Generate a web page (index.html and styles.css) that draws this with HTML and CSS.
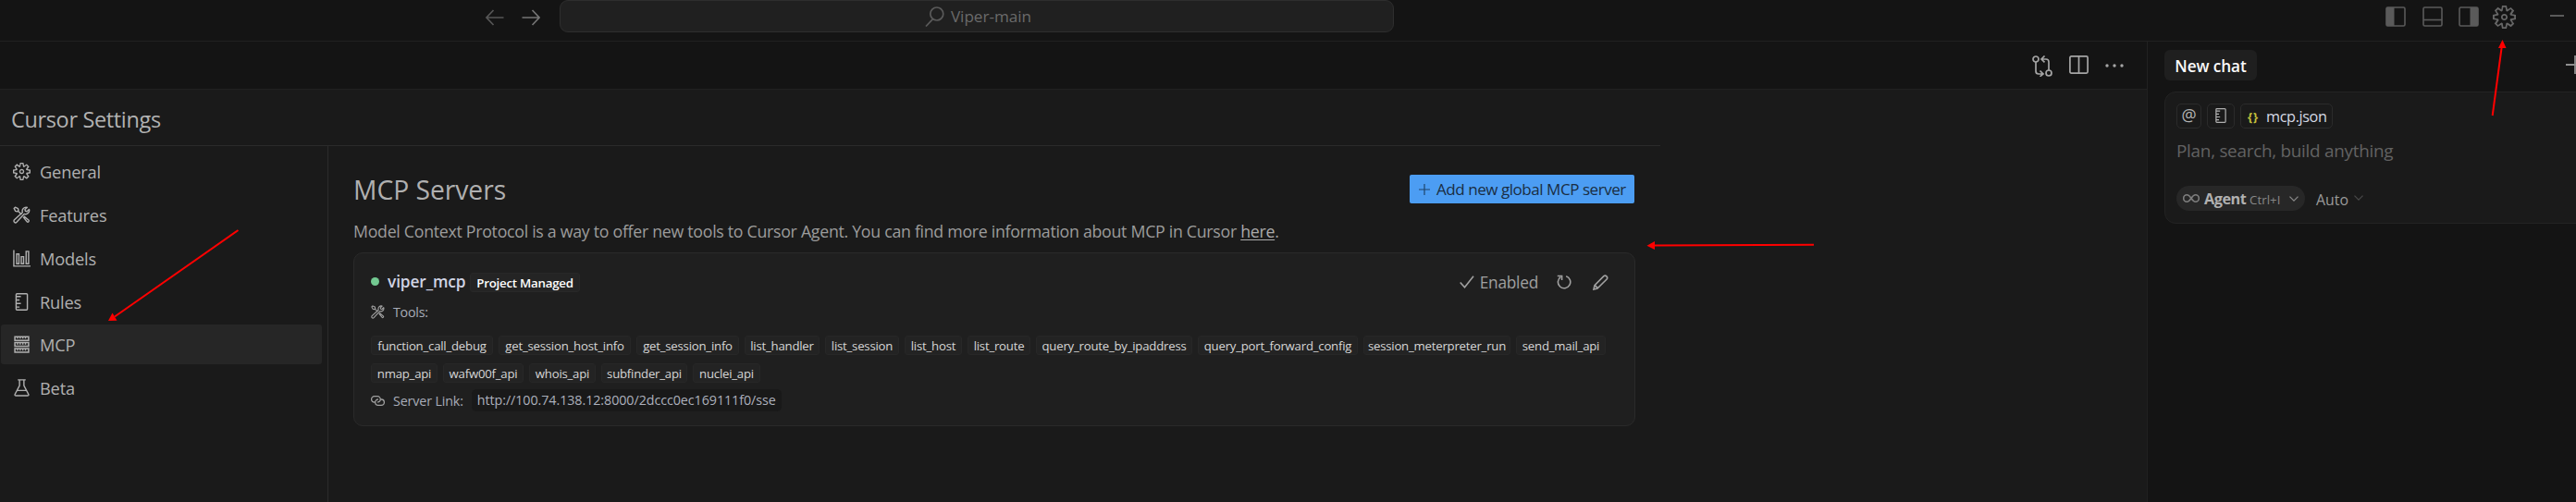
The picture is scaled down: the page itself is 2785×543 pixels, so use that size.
FILE: index.html
```html
<!DOCTYPE html>
<html lang="en">
<head>
<meta charset="utf-8">
<title>Cursor Settings</title>
<link rel="stylesheet" href="styles.css">
</head>
<body>
<svg class="defs" aria-hidden="true">
  <symbol id="gear" viewBox="1 1 14 14"><path fill="currentColor" fill-rule="evenodd" d="M9.1 4.4L8.6 2H7.4l-.5 2.4-.7.3-2-1.3-.9.8 1.3 2-.2.7-2.4.5v1.2l2.4.5.3.8-1.3 2 .8.8 2-1.3.8.3.4 2.3h1.2l.5-2.4.8-.3 2 1.3.8-.8-1.3-2 .3-.8 2.3-.4V7.4l-2.4-.5-.3-.8 1.3-2-.8-.8-2 1.3-.7-.2zM9.4 1l.5 2.4L12 2.1l2 2-1.4 2.1 2.4.4v2.8l-2.4.5L14 12l-2 2-2.1-1.4-.5 2.4H6.6l-.5-2.4L4 13.9l-2-2 1.4-2.1L1 9.4V6.6l2.4-.5L2.1 4l2-2 2.1 1.4.4-2.4h2.8zm.6 7c0 1.1-.9 2-2 2s-2-.9-2-2 .9-2 2-2 2 .9 2 2zM8 9c.6 0 1-.4 1-1s-.4-1-1-1-1 .4-1 1 .4 1 1 1z"/></symbol>
  <symbol id="tools" viewBox="0 0 20 20"><g fill="none" stroke="currentColor" stroke-width="1.5" stroke-linejoin="round"><path d="M1.2 2.6 2.6 1.2l3.2 1.6.5 2L4.9 6.2l-2-.5zM5.8 5.6l4 4M11.6 12.2l4.4 5.4a1.2 1.2 0 0 0 1.8-1.8l-5.4-4.4"/><path d="M16.2 1.4a4.3 4.3 0 0 0-5.3 5.6L1.6 15.6a1.7 1.7 0 0 0 2.6 2.6l8.6-9.3a4.3 4.3 0 0 0 5.6-5.3L15.9 6l-1.8-.4-.4-1.8z"/></g></symbol>
  <symbol id="rule" viewBox="0 0 20 20"><path fill="none" stroke="currentColor" stroke-width="1.5" d="M4.600.8h10.800a1 1 0 0 1 1 1v16.400a1 1 0 0 1-1 1H4.600a1 1 0 0 1-1-1V1.800a1 1 0 0 1 1-1zM4 4h5M4 7.900h3.500M4 11.900h5M4 15.900h3.500"/></symbol>
  <symbol id="chev" viewBox="0 0 10 6"><path fill="none" stroke="currentColor" stroke-width="1.300" d="M.5.600 5 5.100 9.500.600"/></symbol>
</svg>

<div class="window">
  <header class="titlebar">
    <div class="history">
      <svg class="arrow dim" viewBox="0 0 20 18"><path d="M19.500 9H1.500M8.500 1 1 9l7.500 8"/></svg>
      <svg class="arrow" viewBox="0 0 20 18"><path d="M.5 9h18M11.500 1 19 9l-7.500 8"/></svg>
    </div>
    <div class="command">
      <svg class="magnifier" viewBox="0 0 21 22"><circle cx="12.800" cy="8" r="7"/><path d="M8.500 13.600 1 21.500"/></svg>
      <span>Viper-main</span>
    </div>
    <div class="window-tools">
      <svg class="panel" viewBox="0 0 22 22"><rect x="1" y="1" width="20" height="20" rx="1.500"/><path class="solid" d="M1 1h8.500v20H1z"/></svg>
      <svg class="panel" viewBox="0 0 22 22"><rect x="1" y="1" width="20" height="20" rx="1.500"/><path d="M1 14.500h20"/></svg>
      <svg class="panel" viewBox="0 0 22 22"><rect x="1" y="1" width="20" height="20" rx="1.500"/><path class="solid" d="M12.500 1H21v20h-8.500z"/></svg>
      <svg class="gear"><use href="#gear"/></svg>
      <span class="minimize"></span>
    </div>
  </header>

  <div class="workbench">
    <main class="editor">
      <div class="tabs">
        <svg class="compare" viewBox="0 0 22 23"><circle cx="4" cy="4" r="3"/><circle cx="18" cy="19" r="3"/><path d="M4 7v10q0 3 3 3h4.500M8.500 16.500l3.500 3.500-3.500 2.800M18 16V7q0-3-3-3h-4.500M13.500.5 10 4l3.500 3.300"/></svg>
        <svg class="split" viewBox="0 0 21 20"><rect x=".9" y=".9" width="19.200" height="18.200" rx="1.500"/><path d="M10.500 1v18"/></svg>
        <svg class="dots" viewBox="0 0 20 4"><circle cx="2" cy="2" r="1.700"/><circle cx="10" cy="2" r="1.700"/><circle cx="18" cy="2" r="1.700"/></svg>
      </div>
      <div class="settings">
        <h1>Cursor Settings</h1>
        <div class="columns">
          <nav>
            <a><svg><use href="#gear"/></svg>General</a>
            <a><svg><use href="#tools"/></svg>Features</a>
            <a><svg viewBox="0 0 20 20"><path fill="none" stroke="currentColor" stroke-width="1.500" d="M1 .5v18.300h19M4.200 5h2.600v11H4.200zM9.500 8h2.600v8H9.500zM15 2h2.800v14H15z"/></svg>Models</a>
            <a><svg><use href="#rule"/></svg>Rules</a>
            <a class="selected"><svg viewBox="0 0 20 20"><path fill="none" stroke="currentColor" stroke-width="1.600" d="M2.200 1.300h15.600v4.200H2.200zM2.200 8h15.600v4.200H2.200zM2.200 14.700h15.600v4.200H2.200z"/><path stroke="currentColor" stroke-width="2" stroke-dasharray="1.500 1.500" d="M4.500 2.500h11M4.500 9.300h11M4.500 16h11"/></svg>MCP</a>
            <a><svg viewBox="0 0 20 20"><path fill="none" stroke="currentColor" stroke-width="1.500" d="M5.500.9h9M7.500 1v6.500L2.300 17.300q-.6 1.700 1.200 1.700h13q1.800 0 1.200-1.700L12.500 7.500V1M5 13h10"/></svg>Beta</a>
          </nav>
          <section class="content">
            <div class="heading">
              <h2>MCP Servers</h2>
              <button><svg viewBox="0 0 12 12"><path d="M6 0v12M0 6h12"/></svg>Add new global MCP server</button>
            </div>
            <p>Model Context Protocol is a way to offer new tools to Cursor Agent. You can find more information about MCP in Cursor <u>here</u>.</p>
            <div class="card">
              <div class="server">
                <i class="dot"></i><strong>viper_mcp</strong><span class="badge">Project Managed</span>
                <div class="actions">
                  <svg class="check" viewBox="0 0 16 14"><path d="M.7 7.500 5.500 12.800 15 .8"/></svg>
                  <span>Enabled</span>
                  <svg class="refresh" viewBox="0 0 16 16"><path d="M10.200 1.700A6.700 6.700 0 1 1 4.200 2.600M.8 1.500h4.800v4.600"/></svg>
                  <svg class="pencil" viewBox="0 0 17 17"><path d="M1 16l1-4.300L11.900 1.700q1.500-1.300 3 .1t.2 3.200L5 15zM2.500 11.800l2.600 2.600"/></svg>
                </div>
              </div>
              <div class="label"><svg><use href="#tools"/></svg>Tools:</div>
              <div class="chips">
                <span style="width:132px">function_call_debug</span><span style="width:143px">get_session_host_info</span><span style="width:111px">get_session_info</span><span style="width:81px">list_handler</span><span style="width:80px">list_session</span><span style="width:62px">list_host</span><span style="width:68px">list_route</span><span style="width:169px">query_route_by_ipaddress</span><span style="width:173px">query_port_forward_config</span><span style="width:159px">session_meterpreter_run</span><span style="width:97px">send_mail_api</span><span style="width:72px">nmap_api</span><span style="width:87px">wafw00f_api</span><span style="width:72px">whois_api</span><span style="width:93px">subfinder_api</span><span style="width:73px">nuclei_api</span>
              </div>
              <div class="label link"><svg viewBox="0 0 20 20"><g fill="none" stroke="currentColor" stroke-width="1.700"><path d="M6 12H5a4.200 4.200 0 0 1 0-8.400h4.500a4.200 4.200 0 0 1 0 8.400"/><path d="M14 8h1a4.200 4.200 0 0 1 0 8.400h-4.500a4.200 4.200 0 0 1 0-8.400"/></g></svg>Server Link:<code>http://100.74.138.12:8000/2dccc0ec169111f0/sse</code></div>
            </div>
          </section>
        </div>
      </div>
    </main>

    <aside class="chat">
      <div class="chat-head"><span class="chat-tab">New chat</span><svg viewBox="0 0 20 20"><path d="M10 0v20M0 10h20"/></svg></div>
      <div class="composer">
        <div class="context">
          <span class="at">@</span>
          <span class="rules"><svg><use href="#rule"/></svg></span>
          <span class="file"><b>{}</b>mcp.json</span>
        </div>
        <div class="placeholder">Plan, search, build anything</div>
        <div class="mode">
          <span class="agent"><svg class="loop" viewBox="0 0 18 9"><path d="M9 4.500C7.300 2 6 .8 4.400.8a3.700 3.700 0 0 0 0 7.400C6 8.200 7.300 7 9 4.500S12 .8 13.600.8a3.700 3.700 0 0 1 0 7.400C12 8.200 10.700 7 9 4.500z"/></svg><strong>Agent</strong><small>Ctrl+I</small><svg class="chev"><use href="#chev"/></svg></span>
          <span class="auto">Auto<svg class="chev"><use href="#chev"/></svg></span>
        </div>
      </div>
    </aside>
  </div>

  <!-- Pointer annotations over the window -->
  <svg class="pointers" viewBox="0 0 2785 543">
    <path class="shaft" d="M257.500 249 124 342.500M1961 264.700 1788 265.600M2694.700 125 2704.800 50"/>
    <path class="head" d="M117 347l4.500-8.500 5 8.200zM1780.500 265.700l8.500-4.700v9zM2705.500 43l4 9h-8.500z"/>
  </svg>
</div>
</body>
</html>
```

FILE: styles.css
```css
* { box-sizing: border-box; }
body { margin: 0; background: #141414; color: #b0b0b0; font-family: "Open Sans", "Noto Sans", sans-serif; }
svg { display: block; flex: none; }
.defs { position: absolute; width: 0; height: 0; }
.window { position: relative; display: flex; flex-direction: column; width: 2785px; height: 543px; overflow: hidden; }

/* title bar */
.titlebar { display: flex; height: 45px; border-bottom: 1px solid #212121; color: #6a6a6a; }
.history { display: flex; gap: 19px; width: 605px; padding: 10px 0 0 525px; }
.arrow { width: 20px; height: 18px; fill: none; stroke: #747474; stroke-width: 1.7; }
.arrow.dim { stroke: #565656; }
.command { display: flex; align-items: center; justify-content: center; gap: 7px; width: 902px; height: 35px; padding-left: 3px; background: #202020; border: 1px solid #2e2e2e; border-radius: 9px; font-size: 17.2px; letter-spacing: -.05px; line-height: 34px; }
.magnifier { width: 21px; height: 22px; fill: none; stroke: #5a5a5a; stroke-width: 1.7; }
.window-tools { display: flex; align-items: flex-start; gap: 17.500px; margin-left: 1072px; padding-top: 7px; }
.panel { width: 22px; height: 22px; fill: none; stroke: #5a5a5a; stroke-width: 1.6; }
.panel .solid { fill: #5a5a5a; stroke: none; }
.window-tools .gear { width: 25px; height: 25px; margin: -1px 0 0 -3px; color: #666; }
.minimize { width: 15px; height: 2px; margin: 9px 0 0 20px; background: #5a5a5a; }

.workbench { display: flex; flex: 1; min-height: 0; }
.editor { display: flex; flex-direction: column; width: 2321px; background: #1a1a1a; }
.tabs { display: flex; align-items: flex-start; height: 52px; padding: 15px 0 0 2197px; background: #141414; border-bottom: 1px solid #212121; }
.tabs svg { fill: none; stroke: #a5a5a5; stroke-width: 1.7; }
.compare { width: 22px; height: 23px; }
.split { width: 21px; height: 20px; margin-left: 18px; }
.tabs .dots { width: 20px; height: 4px; margin: 9px 0 0 18px; fill: #a5a5a5; stroke: none; }

.settings { display: flex; flex-direction: column; flex: 1; width: 1795px; }
h1 { height: 61px; margin: 0; padding: 2px 0 0 12px; border-bottom: 1px solid #2b2b2b; font-size: 23.5px; font-weight: 400; letter-spacing: -.35px; line-height: 60px; color: #b2b2b2; }
.columns { display: flex; flex: 1; }
nav { display: flex; flex-direction: column; gap: 4px; width: 355px; padding: 5.400px 6px 0 1px; border-right: 1px solid #2b2b2b; }
nav a { display: flex; align-items: center; gap: 10px; height: 42.900px; padding: 1px 0 0 13px; border-radius: 3px; font-size: 18.300px; letter-spacing: -.2px; }
nav svg { width: 19px; height: 19px; }
nav .selected { background: #262626; }

.content { width: 1414px; padding: 31px 0 0 27px; }
.heading { display: flex; align-items: center; justify-content: space-between; height: 31px; width: 1385px; }
h2 { margin: 0; padding-top: 2px; font-size: 28.300px; font-weight: 400; letter-spacing: -.05px; line-height: 31px; color: #b0b0b0; }
button { display: flex; align-items: center; gap: 7px; width: 243px; height: 31px; padding: 0 0 0 10px; border: 0; border-radius: 2px; background: #4c9df3; color: #1a2d42; font: 17px/31px "Open Sans", sans-serif; letter-spacing: -.45px; white-space: nowrap; }
button svg { width: 12px; height: 12px; stroke: #1f456c; stroke-width: 1.2; }
p { margin: 16px 0 0; font-size: 17.800px; letter-spacing: -.3px; line-height: 28px; color: #9c9c9c; white-space: nowrap; }
u { text-underline-offset: 2px; color: #aaa; }

.card { width: 1386px; height: 188px; margin-top: 9px; padding: 16px 18px; background: #1f1f1f; border: 1px solid #2a2a2a; border-radius: 10px; }
.server { display: flex; align-items: center; height: 30px; }
.dot { width: 9px; height: 9px; margin-top: -2px; border-radius: 50%; background: #73c991; }
.server strong { width: 98px; padding-left: 9px; font-size: 17.300px; font-weight: 600; letter-spacing: -.1px; line-height: 28px; color: #d0d4e4; }
.badge { width: 119px; height: 21px; border: 1px solid #282828; border-radius: 3px; background: #242424; color: #fff; font-size: 13.300px; font-weight: 600; letter-spacing: -.24px; line-height: 20px; text-align: center; }
.actions { display: flex; align-items: center; margin-left: auto; padding-right: 10px; font-size: 17.300px; letter-spacing: -.25px; color: #a0a0a0; }
.actions svg { fill: none; stroke: #a0a0a0; stroke-width: 1.6; }
.check { width: 16px; height: 14px; margin-right: 6px; }
.refresh { width: 16px; height: 16px; margin-left: 20px; }
.pencil { width: 17px; height: 17px; margin-left: 23px; }
.label { display: flex; align-items: center; gap: 9px; height: 20px; margin-top: 7px; font-size: 14.300px; letter-spacing: -.25px; color: #a8acb8; }
.label svg { width: 15px; height: 15px; color: #a0a0a0; }
.chips { display: flex; flex-wrap: wrap; gap: 9px 6px; margin-top: 16px; margin-right: -20px; width: 1345px; }
.chips span { height: 21px; border: 1px solid #272727; border-radius: 3px; background: #232323; color: #d6d6d6; font-size: 13.200px; letter-spacing: -.22px; line-height: 20px; text-align: center; white-space: nowrap; }
.link { height: 24px; letter-spacing: -.15px; }
.link code { width: 335px; height: 24px; border-radius: 5px; background: #191919; font: 14.300px/24px "Open Sans", sans-serif; letter-spacing: -.07px; text-align: center; color: #acb0bc; }

/* chat pane */
.chat { width: 464px; border-left: 1px solid #212121; padding-left: 18px; background: #141414; }
.chat-head { display: flex; justify-content: space-between; height: 54px; padding-top: 9px; }
.chat-head svg { width: 20px; height: 20px; margin: 6px -9px 0 0; stroke: #8f8f8f; stroke-width: 1.8; }
.chat-tab { width: 100px; height: 33px; border-radius: 6px; background: #1f1f1f; color: #fafafa; font-size: 17.200px; font-weight: 600; letter-spacing: -.1px; line-height: 35px; text-align: center; }
.composer { height: 143px; width: 460px; padding: 12px; border: 1px solid #232323; border-radius: 12px; background: #1a1a1a; }
.context { display: flex; gap: 6px; height: 27px; }
.context span { display: flex; align-items: center; height: 27px; border: 1px solid #2b2b2b; border-radius: 5px; }
.context .at { width: 27px; justify-content: center; padding-bottom: 3px; font-size: 18px; font-weight: 500; color: #b4b4b4; }
.context .rules { width: 30px; justify-content: center; padding-bottom: 2px; }
.rules svg { width: 16px; height: 16px; }
.context .file { width: 100px; padding-left: 7px; font-size: 16.300px; letter-spacing: -.4px; color: #d4d8e4; }
.file b { width: 20px; font: 700 13px "Open Sans", sans-serif; letter-spacing: 1px; color: #c3c13c; }
.placeholder { margin-top: 10px; font-size: 18.900px; letter-spacing: -.27px; line-height: 29px; color: #626262; }
.mode { display: flex; align-items: center; gap: 12px; height: 27px; margin-top: 23px; }
.agent { display: flex; align-items: center; width: 139px; height: 27px; padding-left: 7px; border-radius: 14px; background: #272727; }
.loop { width: 18px; height: 9px; margin-right: 5px; fill: none; stroke: #7e7e7e; stroke-width: 1.6; }
.agent strong { width: 49px; font-size: 16.300px; font-weight: 700; letter-spacing: -.5px; color: #b0b0b0; }
.agent small { width: 43px; margin-top: 2px; font-size: 13.300px; font-weight: 500; letter-spacing: .05px; color: #888; }
.chev { width: 10px; height: 6px; color: #888; }
.auto { display: flex; align-items: center; gap: 6px; padding-top: 2px; font-size: 15.900px; color: #9a9a9a; }
.auto .chev { margin-top: -4px; color: #484848; }

.pointers { position: absolute; left: 0; top: 0; width: 2785px; height: 543px; pointer-events: none; }
.shaft { fill: none; stroke: #f00; stroke-width: 2; }
.head { fill: #f00; }
```
